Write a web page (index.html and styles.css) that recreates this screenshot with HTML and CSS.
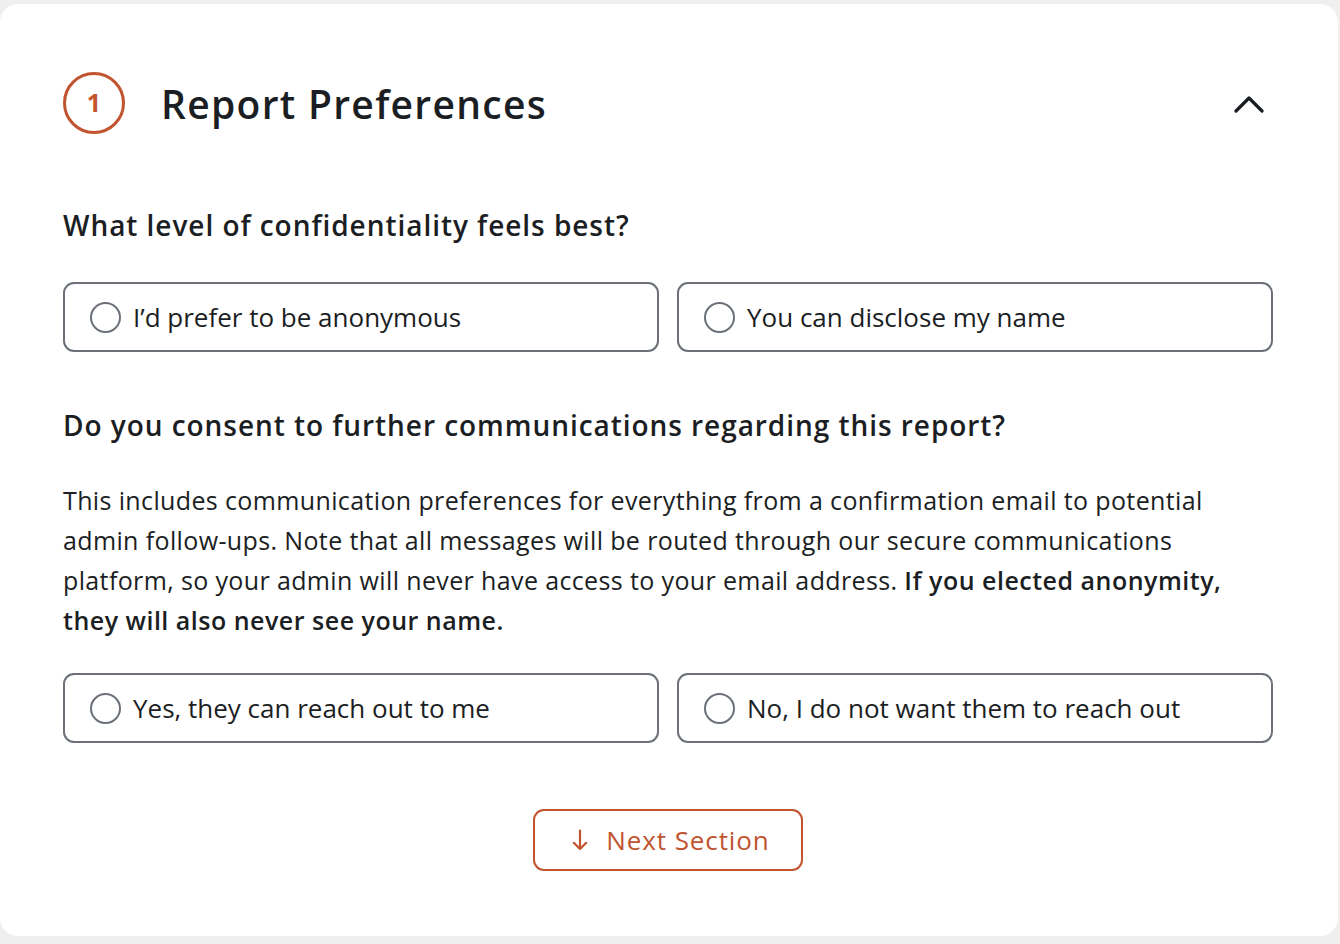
FILE: index.html
```html
<!DOCTYPE html>
<html lang="en">
<head>
<meta charset="utf-8">
<title>Report Preferences</title>
<link rel="stylesheet" href="styles.css">
</head>
<body>
<div class="card">
  <div class="header">
    <div class="step">1</div>
    <h1 class="title">Report Preferences</h1>
    <svg class="chevron" width="30" height="18" viewBox="0 0 30 18"><path d="M2 16 L15 3 L28 16" fill="none" stroke="#1a1d21" stroke-width="3.2" stroke-linecap="round" stroke-linejoin="round"/></svg>
  </div>

  <h2 class="question q1">What level of confidentiality feels best?</h2>
  <div class="options opts1">
    <label class="option"><span class="radio"></span><span class="opt-text">I’d prefer to be anonymous</span></label>
    <label class="option"><span class="radio"></span><span class="opt-text">You can disclose my name</span></label>
  </div>

  <h2 class="question q2">Do you consent to further communications regarding this report?</h2>
  <p class="desc">This includes communication preferences for everything from a confirmation email to potential<br>admin follow-ups. Note that all messages will be routed through our secure communications<br>platform, so your admin will never have access to your email address. <strong>If you elected anonymity,<br>they will also never see your name.</strong></p>
  <div class="options opts2">
    <label class="option"><span class="radio"></span><span class="opt-text">Yes, they can reach out to me</span></label>
    <label class="option"><span class="radio"></span><span class="opt-text">No, I do not want them to reach out</span></label>
  </div>

  <div class="actions">
    <button class="next"><svg class="arrow" width="16" height="22" viewBox="0 0 16 22"><path d="M8 1.5 V20 M1.8 13.8 L8 20 L14.2 13.8" fill="none" stroke="#c1532f" stroke-width="2.2" stroke-linecap="round" stroke-linejoin="round"/></svg><span>Next Section</span></button>
  </div>
</div>
</body>
</html>
```

FILE: styles.css
```css
* { box-sizing: border-box; }
html, body { margin: 0; padding: 0; }
body {
  background: #efefef;
  font-family: "Open Sans", Lato, sans-serif;
  color: #1b1e23;
  width: 1340px;
  height: 944px;
  overflow: hidden;
}
.card {
  margin-top: 4px;
  width: 1338px;
  height: 932px;
  background: #ffffff;
  border-radius: 18px;
  padding: 68px 65px 0 63px;
}
.header {
  display: flex;
  align-items: center;
  height: 62px;
}
.step {
  width: 62px;
  height: 62px;
  border: 3px solid #c1532f;
  border-radius: 50%;
  display: flex;
  align-items: center;
  justify-content: center;
  color: #c1532f;
  font-weight: 700;
  font-size: 25px;
  padding-bottom: 2px;
}
.title {
  margin: 0 0 0 36px;
  font-size: 39px;
  font-weight: 600;
  letter-spacing: 1.3px;
  flex: 1;
}
.chevron {
  margin-right: 9px;
  margin-top: 2px;
}
.question {
  margin: 0;
  font-size: 28px;
  line-height: 36px;
  font-weight: 600;
  letter-spacing: 0.95px;
}
.q1 { margin-top: 73px; }
.q2 { margin-top: 55px; }
.options {
  display: grid;
  grid-template-columns: 1fr 1fr;
  gap: 18px;
}
.opts1 { margin-top: 39px; }
.opts2 { margin-top: 33px; }
.option {
  height: 70px;
  border: 2px solid #6b7079;
  border-radius: 11px;
  display: flex;
  align-items: center;
  padding-left: 25px;
}
.radio {
  width: 31px;
  height: 31px;
  border: 2.6px solid #6b7079;
  border-radius: 50%;
  flex: none;
}
.opt-text {
  margin-left: 12px;
  font-size: 26px;
}
.desc {
  margin: 37px 0 0;
  font-size: 25px;
  line-height: 40px;
  letter-spacing: 0.37px;
}
.desc strong { font-weight: 600; letter-spacing: 0.5px; }
.actions {
  display: flex;
  justify-content: center;
  margin-top: 66px;
}
.next {
  width: 270px;
  height: 62px;
  border: 2px solid #c1532f;
  border-radius: 11px;
  background: #fff;
  color: #c1532f;
  font-family: "Open Sans", Lato, sans-serif;
  font-size: 26px;
  letter-spacing: 0.9px;
  display: flex;
  align-items: center;
  justify-content: center;
  padding: 0 0 0 6px;
}
.arrow {
  margin-right: 18px;
  flex: none;
}
```
